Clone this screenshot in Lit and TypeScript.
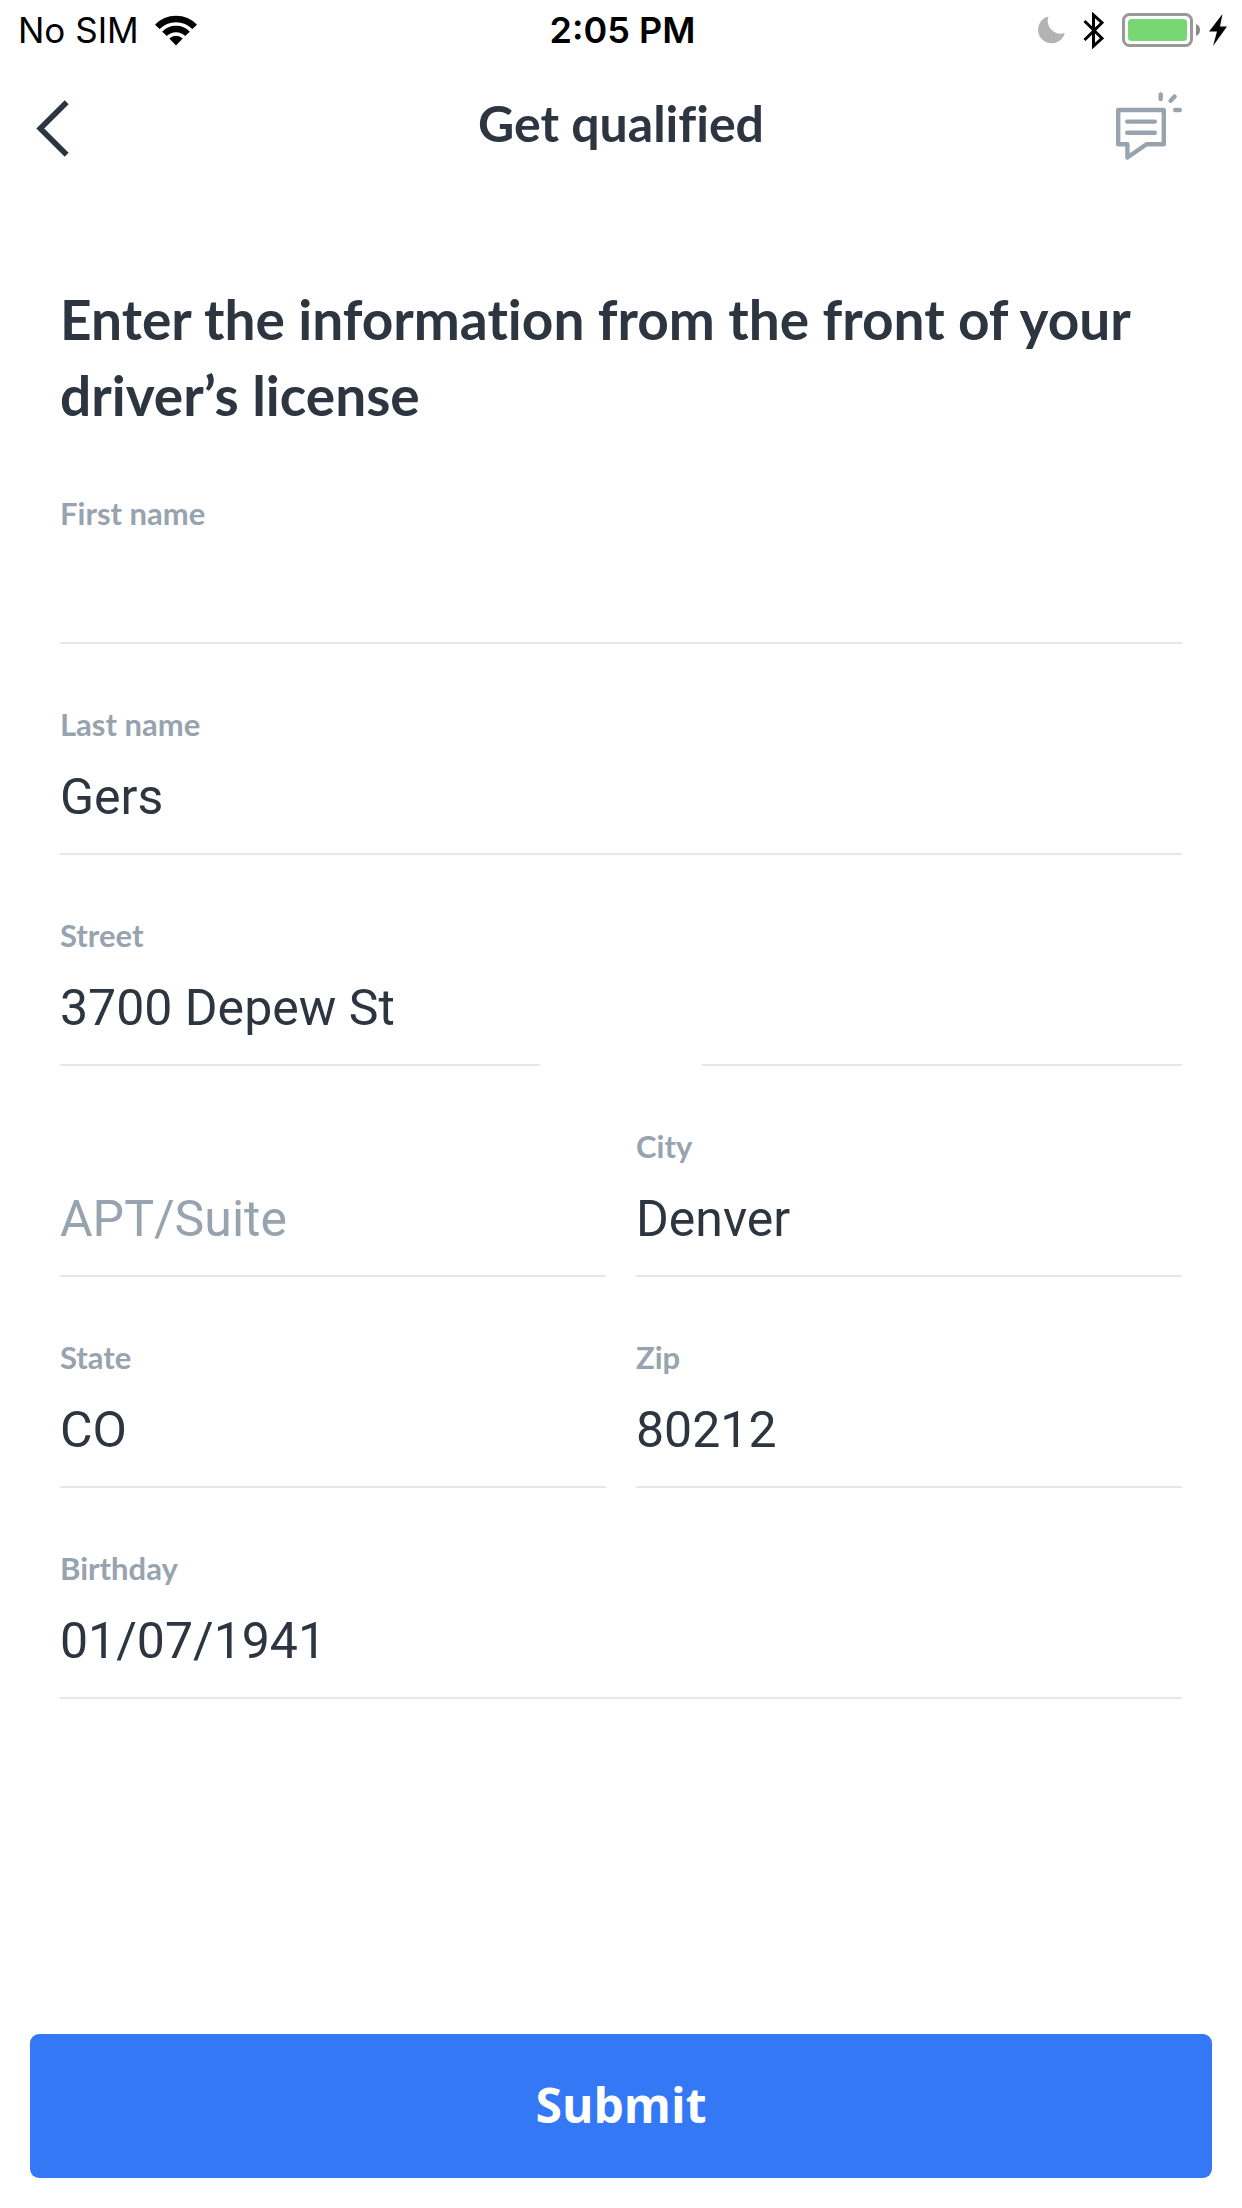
import { LitElement, html, css, svg, nothing } from "lit";
import { customElement, property } from "lit/decorators.js";

@customElement("form-field")
class FormField extends LitElement {
  @property() label = "";
  @property() value = "";
  @property() placeholder = "";
  @property() name = "";
  @property() hint = "";

  static styles = css`
    :host {
      display: block;
      min-width: 0;
    }
    .field {
      display: flex;
      flex-direction: column;
      padding-top: 60px;
      border-bottom: 2px solid #e6e7eb;
    }
    .label {
      min-height: 40px;
      font: 700 31px/40px Lato, sans-serif;
      font-variant-ligatures: none;
      color: #97a3ae;
    }
    .input {
      width: 100%;
      height: 109px;
      box-sizing: border-box;
      padding: 0 0 4px;
      border: 0;
      outline: 0;
      background: transparent;
      font: 400 50px/60px Roboto, sans-serif;
      color: #2d3541;
    }
    .input::placeholder {
      color: #97a3ae;
      opacity: 1;
    }
  `;

  render() {
    return html`
      <div class="field">
        <label class="label" for="control">${this.label}</label>
        <input
          class="input"
          id="control"
          type="text"
          name=${this.name}
          .value=${this.value}
          placeholder=${this.placeholder || nothing}
          aria-label=${this.hint || nothing}
        />
      </div>
    `;
  }
}

const wifi = svg`
  <g fill="none" stroke="#000" stroke-width="6.4">
    <path d="M2.3 11.9 A26 26 0 0 1 39.7 11.9" />
    <path d="M9.5 18.9 A16 16 0 0 1 32.5 18.9" />
  </g>
  <path d="M21 30.5 L14.3 23.5 A9.6 9.6 0 0 1 27.7 23.5 Z" />`;

const battery = svg`
  <rect x="1.5" y="1.5" width="68" height="31" rx="6" fill="none" stroke="#999" stroke-width="3" />
  <rect x="6" y="6" width="59" height="22" rx="3.5" fill="#78d773" />
  <path d="M74 11 A6.5 6.5 0 0 1 74 23 Z" fill="#8a8a8a" />`;

@customElement("app-root")
class AppRoot extends LitElement {
  static styles = css`
    :host {
      display: flex;
      flex-direction: column;
      min-height: 100vh;
      background: #fff;
      color: #2d3541;
    }
    svg {
      display: block;
      flex: none;
    }
    .status,
    .nav {
      display: grid;
      grid-template-columns: 1fr auto 1fr;
      align-items: center;
    }
    .status {
      height: 60px;
      padding: 0 15px 0 18px;
      font: 400 35px/60px Inter, sans-serif;
      color: #000;
    }
    .carrier,
    .indicators {
      display: flex;
      align-items: center;
      gap: 18px;
    }
    .carrier {
      gap: 16px;
    }
    .indicators {
      justify-content: flex-end;
    }
    .time {
      font-size: 36px;
      font-weight: 600;
    }
    .charge {
      display: flex;
      align-items: center;
      gap: 9px;
    }
    .nav {
      height: 131px;
      padding: 0 36px;
    }
    .title {
      margin: 0;
      padding-bottom: 6px;
      font: 700 50px/60px Lato, sans-serif;
      font-variant-ligatures: none;
    }
    .icon-button {
      padding: 0;
      border: 0;
      background: none;
      cursor: pointer;
    }
    .back {
      justify-self: start;
      padding-top: 6px;
    }
    .chat {
      justify-self: end;
      padding-right: 24px;
    }
    .form {
      flex: 1;
      display: flex;
      flex-direction: column;
    }
    .fields {
      flex: 1;
      padding: 90px 60px 60px;
    }
    .heading {
      margin: 0;
      font: 700 55px/76px Lato, sans-serif;
      font-variant-ligatures: none;
    }
    .row {
      display: grid;
      grid-template-columns: 1fr 1fr;
      gap: 30px;
    }
    .row.wide {
      gap: 162px;
    }
    .submit {
      height: 144px;
      margin: 0 30px 30px;
      padding: 0 0 2px;
      border: 0;
      border-radius: 9px;
      background: #3478f6;
      color: #fff;
      font: 700 48px/60px "Open Sans", sans-serif;
      cursor: pointer;
    }
  `;

  render() {
    return html`
      <div class="status">
        <div class="carrier">
          <span>No SIM</span>
          <svg width="42" height="31" viewBox="0 0 42 31">${wifi}</svg>
        </div>
        <span class="time">2:05 PM</span>
        <div class="indicators">
          <svg width="27" height="28" viewBox="0 0 27 28">
            <path d="M10.5 .5 A13.6 13.6 0 1 0 26.8 17 A13 13 0 0 1 10.5 .5 Z" fill="#b3b3b3" />
          </svg>
          <svg width="21" height="37" viewBox="0 0 21 37">
            <path d="M1.5 9 L19 26.3 L10.5 34 V3 L19 10.7 L1.5 28" fill="none" stroke="#000" stroke-width="3" />
          </svg>
          <div class="charge">
            <svg width="78" height="34" viewBox="0 0 78 34">${battery}</svg>
            <svg width="18" height="33" viewBox="0 0 18 33">
              <path d="M13.5 0 L0 17.5 H8 L4 32 L18 12.5 H11 Z" />
            </svg>
          </div>
        </div>
      </div>

      <header class="nav">
        <button class="icon-button back" type="button" aria-label="Back">
          <svg width="33" height="57" viewBox="0 0 33 57">
            <path d="M30.7 2.3 L4.3 28.5 L30.7 54.7" fill="none" stroke="#2d3541" stroke-width="5.6" />
          </svg>
        </button>
        <h1 class="title">Get qualified</h1>
        <button class="icon-button chat" type="button" aria-label="Messages">
          <svg width="66" height="68" viewBox="0 0 66 68">
            <g fill="none" stroke="#97a3ae" stroke-width="4.4" stroke-linecap="round" stroke-linejoin="round">
              <path d="M2.2 18 H47.8 V52.3 H30.5 L11.4 65.5 V52.3 H2.2 Z" />
              <path d="M11.2 29.6 H38.8 M11.2 40.8 H38.8" />
              <path d="M44.7 2.5 V7 M58.6 4.6 L54.6 8.8 M59.2 18 H63.8" />
            </g>
          </svg>
        </button>
      </header>

      <form class="form" @submit=${(e: Event) => e.preventDefault()}>
        <div class="fields">
          <h2 class="heading">Enter the information from the front of your driver’s license</h2>
          <form-field label="First name" name="first"></form-field>
          <form-field label="Last name" name="last" value="Gers"></form-field>
          <div class="row wide">
            <form-field label="Street" name="street" value="3700 Depew St"></form-field>
            <form-field name="street2" hint="Street, continued"></form-field>
          </div>
          <div class="row">
            <form-field name="unit" placeholder="APT/Suite" hint="APT/Suite"></form-field>
            <form-field label="City" name="city" value="Denver"></form-field>
          </div>
          <div class="row">
            <form-field label="State" name="state" value="CO"></form-field>
            <form-field label="Zip" name="zip" value="80212"></form-field>
          </div>
          <form-field label="Birthday" name="birthday" value="01/07/1941"></form-field>
        </div>
        <button class="submit" type="submit">Submit</button>
      </form>
    `;
  }
}
